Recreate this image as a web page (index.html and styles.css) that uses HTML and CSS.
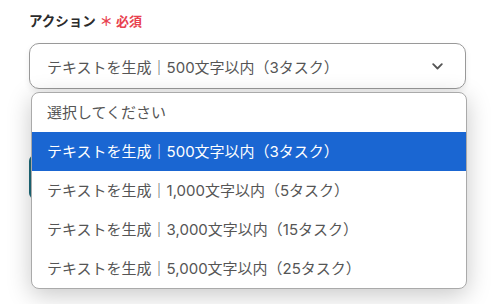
FILE: index.html
```html
<!DOCTYPE html>
<html lang="ja">

<head>
  <meta charset="UTF-8">
  <title>アクション</title>
  <link rel="stylesheet" href="styles.css">
</head>

<body>

  <div class="field">
    <label class="field-label">アクション<span class="required">＊ 必須</span></label>

    <div class="select-wrap">
      <div class="select">
        <span class="select-value">テキストを生成｜500文字以内（3タスク）</span>
        <svg class="chevron" width="11" height="7" viewBox="0 0 11 7">
          <path d="M1.2 1.2 L5.5 5.5 L9.8 1.2" fill="none" stroke="#555" stroke-width="1.8" stroke-linecap="round" stroke-linejoin="round" />
        </svg>
      </div>

      <ul class="menu">
        <li>選択してください</li>
        <li class="active">テキストを生成｜500文字以内（3タスク）</li>
        <li>テキストを生成｜1,000文字以内（5タスク）</li>
        <li>テキストを生成｜3,000文字以内（15タスク）</li>
        <li>テキストを生成｜5,000文字以内（25タスク）</li>
      </ul>
    </div>

    <div class="test-btn"></div>
  </div>

</body>

</html>
```

FILE: styles.css
```css
html,
body {
  height: 100%;
}

body {
  margin: 0;
  min-height: 304px;
  background: #fff;
  font-family: "Inter", "Noto Sans CJK JP", sans-serif;
  color: #444;
  text-spacing-trim: space-all;
}

.field {
  padding: 11px 33px 0 29px;
}

.field-label {
  display: block;
  font-size: 13.5px;
  line-height: 20px;
  font-weight: bold;
  color: #2b2b2b;
}

.required {
  color: #e8414f;
  font-size: 13px;
  margin-left: 4px;
}

.select-wrap {
  position: relative;
  margin-top: 12px;
}

.select {
  height: 44px;
  border: 1px solid #999;
  border-radius: 10px;
  box-shadow: 0 3px 6px rgba(0, 0, 0, 0.08);
  display: flex;
  align-items: center;
  justify-content: space-between;
  padding: 0 22px 0 17px;
  font-size: 15px;
  color: #555;
}

.menu {
  position: absolute;
  top: 49px;
  left: 2px;
  right: -1px;
  margin: 0;
  padding: 0;
  list-style: none;
  background: #fff;
  border: 1px solid #aaa;
  border-radius: 8px;
  box-shadow: 0 6px 24px rgba(0, 0, 0, 0.22);
  overflow: hidden;
  z-index: 2;
}

.menu li {
  height: 39px;
  line-height: 39px;
  padding-left: 15px;
  font-size: 15px;
  color: #555;
}

.menu li.active {
  background: #1a66d2;
  color: #fff;
}

.test-btn {
  margin-top: 66px;
  width: 120px;
  height: 44px;
  background: #1d6b7a;
  border-radius: 6px;
}
```
